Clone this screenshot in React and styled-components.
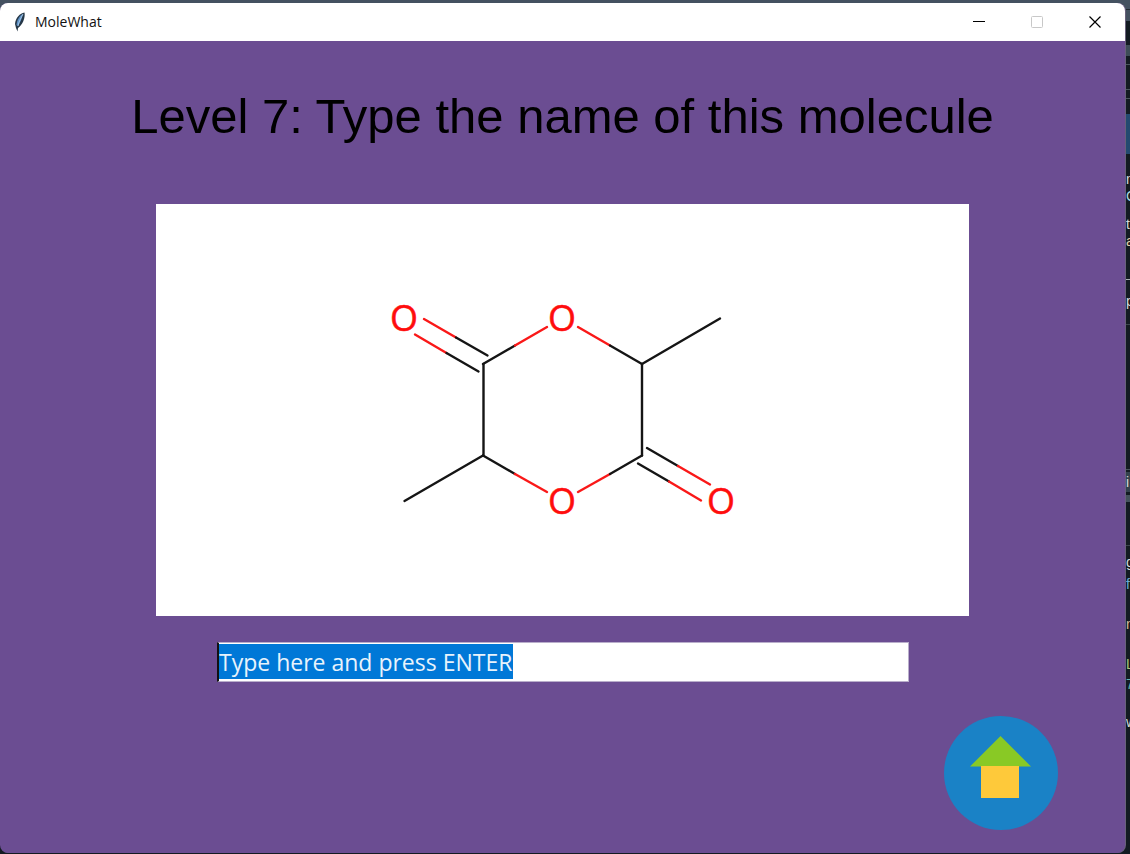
import React, { useEffect, useRef, useState } from "react";
import styled, { createGlobalStyle } from "styled-components";

const GlobalStyle = createGlobalStyle`
  * { box-sizing: border-box; }
  body {
    margin: 0;
    background: #131b22;
    font-family: "Liberation Sans", Arial, sans-serif;
  }
`;

const Desktop = styled.div`
  display: grid;
  grid-template-columns: minmax(0, 1fr) 5px;
  background: linear-gradient(#445160 0, #445160 20px, #131b22 20px);
  overflow: hidden;
`;

const Window = styled.main`
  margin-top: 3px;
  margin-bottom: 1px;
  border-radius: 8px;
  overflow: hidden;
  background: #6b4d92;
  box-shadow: 1px 0 0 #69617b;
`;

const TitleBar = styled.header`
  display: flex;
  align-items: center;
  height: 38px;
  padding: 0 1px 0 13px;
  background: #fff;
`;

const AppName = styled.span`
  flex: 1;
  margin-left: 9px;
  font: 14px/20px "Open Sans", "Noto Sans", sans-serif;
  color: #111;
`;

const WindowButton = styled.button`
  display: grid;
  place-items: center;
  width: 58px;
  height: 38px;
  padding: 0;
  border: 0;
  background: transparent;
  color: ${(p) => (p.disabled ? "#c8c8c8" : "#000")};
`;

const Content = styled.section`
  display: flex;
  flex-direction: column;
  padding: 47px 68px 23px;
`;

const Heading = styled.h1`
  margin: 0;
  font-size: 49px;
  line-height: 56px;
  font-weight: 400;
  text-align: center;
  color: #000;
`;

const Board = styled.div`
  margin: 60px 88px 0;
  background: #fff;
`;

const Drawing = styled.svg`
  display: block;
  width: 100%;
  height: auto;
`;

const AtomLabel = styled.text`
  font: 36px "Open Sans", "Noto Sans", sans-serif;
  fill: #ff0d0d;
  stroke: #ff0d0d;
  stroke-width: 0.5px;
  text-anchor: middle;
`;

const Answer = styled.input`
  height: 40px;
  margin: 26px 148px 0 149px;
  padding: 0;
  border: 1px solid #b9aecb;
  border-left: 2px solid #111;
  border-radius: 0;
  outline: 0;
  background: ${(p) =>
    p.$pristine
      ? "linear-gradient(#0078d7, #0078d7) 0 1px / 294px 35px no-repeat #fff"
      : "#fff"};
  font: 23px/35px "Open Sans", "Noto Sans", sans-serif;
  color: #222;
  &::selection {
    background: #0078d7;
    color: #e8f3fc;
  }
`;

const HomeButton = styled.button`
  align-self: flex-end;
  display: block;
  width: 114px;
  height: 114px;
  margin-top: 34px;
  margin-right: -1px;
  padding: 0;
  border: 0;
  border-radius: 50%;
  background: #1a82c6;
`;

const Sliver = styled.aside`
  min-width: 0;
  padding-left: 1px;
  overflow: hidden;
  height: 0;
  min-height: 100%;
`;

const Band = styled.div`
  height: ${(p) => p.$h}px;
  overflow: hidden;
  background: ${(p) => p.$bg || "transparent"};
  color: ${(p) => p.$ink || "#d5dade"};
  font: 14px/${(p) => p.$h}px "Liberation Sans", sans-serif;
`;

const bands = [
  { h: 9, bg: "#445160" },
  { h: 1, bg: "#20272e" },
  { h: 11, bg: "#445160" },
  { h: 24 },
  { h: 11, bg: "#3e4d57" },
  { h: 8 },
  { h: 1, bg: "#4a555e" },
  { h: 24 },
  { h: 1, bg: "#4a555e" },
  { h: 8 },
  { h: 1, bg: "#4a555e" },
  { h: 15 },
  { h: 40, bg: "#234a70" },
  { h: 16 },
  { h: 18, text: "m" },
  { h: 16, text: "C", ink: "#a9d8e2" },
  { h: 12 },
  { h: 16, text: "t" },
  { h: 18, text: "a", ink: "#e0cfaa" },
  { h: 29 },
  { h: 1, bg: "#aab0b4" },
  { h: 11 },
  { h: 20, text: "p" },
  { h: 13 },
  { h: 1, bg: "#3c464e" },
  { h: 144 },
  { h: 1, bg: "#4a555e" },
  { h: 2 },
  { h: 20, text: "i", bg: "#34424e" },
  { h: 3 },
  { h: 7, bg: "#44525c" },
  { h: 43 },
  { h: 1, bg: "#3c464e" },
  { h: 6 },
  { h: 20, text: "g" },
  { h: 2 },
  { h: 20, text: "f", ink: "#6cabd8" },
  { h: 20 },
  { h: 20, text: "n", ink: "#d5b99a" },
  { h: 20 },
  { h: 20, text: "L", ink: "#a9c77d" },
  { h: 20, text: "7", ink: "#62b5b5" },
  { h: 18 },
  { h: 20, text: "w" },
];

const black = "#151515";
const red = "#fa1818";

const bonds = [
  ["M483 364 L515 345.500", black],
  ["M515 345.500 L547 327", red],
  ["M578 327 L610 345.500", red],
  ["M610 345.500 L642 364", black],
  ["M642 364 L720 318.500", black],
  ["M642 364 V455.500", black],
  ["M483.500 364 V455.500", black],
  ["M483 455.500 L404.500 501", black],
  ["M483 455.500 L515 474", black],
  ["M515 474 L547 492", red],
  ["M578 492 L610 474", red],
  ["M610 474 L642 455.500", black],
  ["M424 319 L456 337.500", red],
  ["M456 337.500 L487.500 355.500", black],
  ["M415 334.500 L446.500 353", red],
  ["M446.500 353 L478.500 371.500", black],
  ["M647 448 L678 466", black],
  ["M678 466 L710 484.500", red],
  ["M638 463.500 L669 481.500", black],
  ["M669 481.500 L701 500.500", red],
];

const atoms = [
  [404, 331],
  [562, 331],
  [562, 514],
  [721, 514],
];

function Feather() {
  return (
    <svg width="13" height="20" viewBox="0 0 13 20" aria-hidden="true">
      <path d="M11.500 0.500 C7 1 2.500 6 2 12 L3 16 L4.500 19.500 L5 16 C9.500 13 12.500 6 11.500 0.500 Z" fill="#253747" />
      <path d="M10 2 C6 4 4 8 3.500 13 L5 14 C7 11 9 6 10 2 Z" fill="#5b8fc4" />
      <path d="M10 2 C8 6 6 9 5 14" stroke="#b8d3ec" strokeWidth="0.800" fill="none" />
    </svg>
  );
}

function Molecule() {
  return (
    <Drawing viewBox="156 204 813 412" role="img" aria-label="Molecule">
      <g fill="none" strokeWidth="2.400" strokeLinecap="round">
        {bonds.map(([d, color]) => (
          <path key={d} d={d} stroke={color} />
        ))}
      </g>
      {atoms.map(([x, y]) => (
        <AtomLabel key={`${x}-${y}`} x={x} y={y}>O</AtomLabel>
      ))}
    </Drawing>
  );
}

const prompt = "Type here and press ENTER";

export default function App() {
  const [answer, setAnswer] = useState(prompt);
  const field = useRef(null);

  useEffect(() => {
    field.current.focus();
    field.current.select();
  }, []);

  return (
    <>
      <GlobalStyle />
      <Desktop>
        <Window>
          <TitleBar>
            <Feather />
            <AppName>MoleWhat</AppName>
            <WindowButton aria-label="Minimize">
              <svg width="12" height="12" viewBox="0 0 12 12">
                <path d="M0 5.500 H12" stroke="currentColor" />
              </svg>
            </WindowButton>
            <WindowButton aria-label="Maximize" disabled>
              <svg width="12" height="12" viewBox="0 0 12 12">
                <rect x="0.500" y="0.500" width="11" height="11" rx="1" fill="none" stroke="currentColor" />
              </svg>
            </WindowButton>
            <WindowButton aria-label="Close">
              <svg width="12" height="12" viewBox="0 0 12 12">
                <path d="M0.500 0.500 L11.500 11.500 M11.500 0.500 L0.500 11.500" stroke="currentColor" strokeWidth="1.200" />
              </svg>
            </WindowButton>
          </TitleBar>
          <Content>
            <Heading>Level 7: Type the name of this molecule</Heading>
            <Board>
              <Molecule />
            </Board>
            <Answer
              ref={field}
              aria-label="Molecule name"
              value={answer}
              $pristine={answer === prompt}
              spellCheck={false}
              onChange={(e) => setAnswer(e.target.value)}
            />
            <HomeButton aria-label="Home">
              <svg width="114" height="114" viewBox="0 0 114 114">
                <path d="M56.500 20 L87 50.500 H26 Z" fill="#89c925" />
                <rect x="37" y="50" width="38" height="32" fill="#fec93a" />
              </svg>
            </HomeButton>
          </Content>
        </Window>
        <Sliver aria-hidden="true">
          {bands.map((b, i) => (
            <Band key={i} $h={b.h} $bg={b.bg} $ink={b.ink}>{b.text}</Band>
          ))}
        </Sliver>
      </Desktop>
    </>
  );
}
